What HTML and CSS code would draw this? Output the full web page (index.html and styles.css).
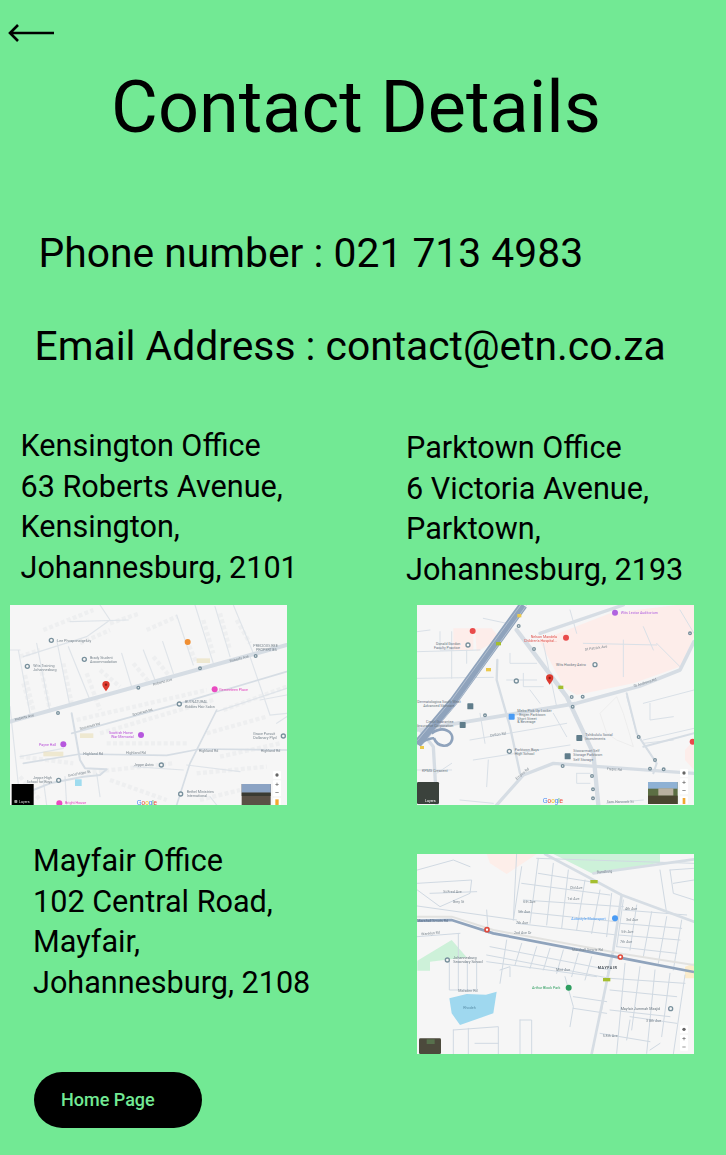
FILE: index.html
```html
<!DOCTYPE html>
<html lang="en">
<head>
<meta charset="utf-8">
<title>Contact Details</title>
<link rel="stylesheet" href="styles.css">
</head>
<body>
<main class="page">
  <a class="back" href="#" aria-label="Back">
    <svg width="48" height="20" viewBox="0 0 48 20"><path d="M47 9H3M11 1 3 9l8 8" fill="none" stroke="#000" stroke-width="2.600"/></svg>
  </a>
  <h1 class="title">Contact Details</h1>
  <p class="line phone">Phone number : 021 713 4983</p>
  <p class="line email">Email Address : contact@etn.co.za</p>

  <section class="offices">
    <div class="office-a">
      <p class="address">Kensington Office<br>63 Roberts Avenue,<br>Kensington,<br>Johannesburg, 2101</p>
      <svg class="map map-a" viewBox="30 15 831 600" role="img" aria-label="Map of Kensington">
        <rect x="30" y="15" width="831" height="600" fill="#f6f6f6"/>
        <g fill="none" stroke="#eeeff0" stroke-width="13" stroke-dasharray="12 7">
          <path d="M60 170 120 150M75 225 100 330M125 215 150 330M190 190 215 310M260 220 300 330M240 130 330 90M300 210 360 260M400 190 450 250M460 170 510 230M560 120 590 190M610 60 640 160M660 40 690 150M710 60 750 130M330 70 420 40M70 250 90 320M130 90 280 30M440 90 530 50"/>
          <path d="M230 360 620 270M300 400 640 300M670 330 860 260M60 470 220 490M320 430 560 430M620 400 800 350M660 470 840 430M240 520 520 490M590 520 800 500M330 540 500 600M600 600 720 570M60 530 120 600"/>
        </g>
        <g fill="none" stroke="#dfe4e9" stroke-width="3.500" stroke-linecap="round">
          <path d="M55 150 90 340M110 130 150 335M170 120 210 320M205 140 270 300M365 160 395 260M430 150 465 240M488 125 520 220M530 45 580 195M585 15 640 190M645 20 690 170M700 15 760 160M300 15 330 60 260 110 70 170M210 65 385 60M750 170 810 345 860 340M30 150 60 150M30 320 60 600M130 540 140 615M195 530 200 615M650 335 860 265M780 300 860 285M560 495 720 515M290 520 300 590M630 590 650 615M830 370 860 350M400 500 550 510M60 470 190 445"/>
        </g>
        <g fill="none" stroke="#d6dde4" stroke-linejoin="round" stroke-linecap="round">
          <path d="M30 365 860 135" stroke-width="12"/>
          <path d="M215 400 540 310 860 215" stroke-width="5"/>
          <path d="M240 462 500 466 600 447 860 450M70 490 240 462" stroke-width="5"/>
          <path d="M215 340 240 480 255 505 320 508 300 525 250 530 150 550 100 570" stroke-width="6"/>
          <path d="M650 330 570 490 530 615" stroke-width="5"/>
        </g>
        <rect x="225" y="538" width="20" height="20" fill="#9fdcef"/>
        <g fill="#eadfb8" opacity=".6"><rect x="130" y="455" width="60" height="14"/><rect x="590" y="175" width="40" height="14"/><rect x="240" y="400" width="40" height="14"/></g>
        <g class="lbl" fill="#7a868f">
          <text x="172" y="126">Lee Phosponatgeluiy</text>
          <text x="270" y="176">Brady Student</text><text x="270" y="189">Accommodation</text>
          <text x="100" y="200">Wits Training</text><text x="100" y="212">Johannesburg</text>
          <text x="760" y="140">PRECIOUS BEE</text><text x="768" y="152">PROPERTIES</text>
          <text x="555" y="308">BUI NATURAL</text><text x="555" y="323">Kiddies Hair Salon</text>
          <text x="402" y="499">Jeppe Astro</text>
          <text x="760" y="406">Grace Pursuit</text><text x="760" y="418">Dollanary Plyd</text>
          <text x="100" y="538">Jeppe High</text><text x="80" y="550">School for Boys</text>
          <text x="560" y="580">Bethel Ministries</text><text x="560" y="592">International</text>
        </g>
        <g class="lbl" fill="#7d8891">
          <text x="45" y="362" transform="rotate(-13 45 362)">Roberts Ave</text>
          <text x="460" y="257" transform="rotate(-15 460 257)">Roberts Ave</text>
          <text x="690" y="187" transform="rotate(-15 690 187)">Roberts Ave</text>
          <text x="398" y="348" transform="rotate(-15 398 348)">Somerset Rd</text>
          <text x="240" y="390" transform="rotate(-15 240 390)">Somerset Rd</text>
          <text x="250" y="465">Highland Rd</text><text x="378" y="462">Highland Rd</text><text x="596" y="455">Highland Rd</text><text x="782" y="457">Highland Rd</text>
          <text x="205" y="530" transform="rotate(-10 205 530)">Good Hope St</text>
        </g>
        <g class="lbl" fill="#b84fd8">
          <text x="327" y="402">Scottish Horse</text><text x="333" y="415">War Memorial</text>
          <text x="117" y="437">Payne Hall</text>
        </g>
        <g class="lbl" fill="#e23fbc"><text x="658" y="274">Gemeeteen Place</text><text x="195" y="613">Bright House</text></g>
        <g fill="#b657dd"><circle cx="423" cy="405" r="9"/><circle cx="190" cy="433" r="9"/></g>
        <g fill="#e94bc0"><circle cx="644" cy="268" r="9"/><circle cx="178" cy="610" r="9"/></g>
        <circle cx="563" cy="126" r="9" fill="#f08f33"/>
        <g fill="#f6f6f6" stroke="#78909c" stroke-width="4"><circle cx="154" cy="121" r="6"/><circle cx="253" cy="178" r="6"/><circle cx="82" cy="199" r="6"/><circle cx="538" cy="312" r="6"/><circle cx="484" cy="495" r="6"/><circle cx="850" cy="408" r="6"/><circle cx="176" cy="541" r="6"/><circle cx="542" cy="582" r="6"/><circle cx="174" cy="339" r="4"/><circle cx="415" cy="263" r="4"/><circle cx="600" cy="205" r="4"/><circle cx="767" cy="168" r="4"/></g>
        <path d="M318 274c-5-9-11-13-11-20a11 11 0 0 1 22 0c0 7-6 11-11 20z" fill="#dd3a2f"/><circle cx="318" cy="254" r="3.500" fill="#8a1c14"/>
        <rect x="35" y="552" width="66" height="63" fill="#000"/>
        <text class="lbl" x="57" y="609" fill="#ddd">Layers</text>
        <rect x="43" y="600" width="9" height="9" rx="2" fill="#999"/>
        <rect x="725" y="552" width="87" height="63" fill="#5a5046"/><rect x="725" y="552" width="87" height="26" fill="#8ba3c4"/><rect x="725" y="578" width="87" height="10" fill="#3a3a32"/>
        <text class="g" x="410" y="614"><tspan fill="#4285f4">G</tspan><tspan fill="#ea4335">o</tspan><tspan fill="#fbbc05">o</tspan><tspan fill="#4285f4">g</tspan><tspan fill="#34a853">l</tspan><tspan fill="#ea4335">e</tspan></text>
        <g fill="#fff"><rect x="819" y="513" width="24" height="24" rx="3"/><rect x="819" y="541" width="24" height="48" rx="3"/><rect x="819" y="593" width="24" height="22" rx="3"/></g>
        <g fill="#666"><circle cx="831" cy="525" r="5"/><rect x="826" y="552" width="10" height="2"/><rect x="830" y="548" width="2" height="10"/><rect x="826" y="577" width="10" height="2"/></g>
        <path d="M826 598h10v17h-10z" fill="#f0a830"/>
      </svg>
    </div>
    <div class="office-b">
      <p class="address">Parktown Office<br>6 Victoria Avenue,<br>Parktown,<br>Johannesburg, 2193</p>
      <svg class="map map-b" viewBox="21 15 831 600" role="img" aria-label="Map of Parktown">
        <rect x="21" y="15" width="831" height="600" fill="#f6f6f6"/>
        <path d="M130 85 190 85 190 150 130 150zM195 85 245 85 270 115 200 155z" fill="#fdedea"/>
        <path d="M388 122 600 40 800 15 852 15 852 110 810 200 670 250 500 285 462 262z" fill="#fdedea"/>
        <path d="M852 420 825 450 825 480 852 510z" fill="#fdedea"/>
        <g fill="none" stroke="#e9e9e9" stroke-width="2"><path d="M570 340 620 290 640 340 670 440 620 420 590 400z"/></g>
        <g fill="none" stroke="#d9e0e7" stroke-width="3" stroke-linecap="round">
          <path d="M22 155 210 150M22 235 250 232M125 95 125 235M90 95 90 150 130 150M170 150 170 190M300 160 300 190 380 190M290 240 380 240M340 220 340 260 400 260M360 270 390 310M400 130 440 320M430 340 470 410M210 340 225 430M180 420 470 370M190 480 480 435M235 480 230 560M125 490 80 520M500 520 540 520M500 520 500 550 540 550M22 510 125 510M700 310 852 270M720 310 720 360 790 350M650 290 680 400 740 490M700 420 852 385M700 430 790 420M520 130 740 135M640 120 640 230M700 80 730 150M740 130 810 200M810 30 852 100M480 30 500 100M220 55 290 70M22 95 60 90M150 600 250 610M590 610 700 600"/>
        </g>
        <g fill="none" stroke="#d6dde4" stroke-linejoin="round" stroke-linecap="round">
          <path d="M320 90 470 290 550 460 565 615" stroke-width="13"/>
          <path d="M22 390 140 370 500 310 690 258 810 210 852 125" stroke-width="11"/>
          <path d="M390 100 640 15" stroke-width="10"/>
          <path d="M260 615 340 525 430 490 852 520" stroke-width="10"/>
          <path d="M22 380 70 440 80 615" stroke-width="10"/>
          <path d="M262 180 260 240 300 380 330 520" stroke-width="7"/>
          <path d="M650 280 680 400 740 490 730 520" stroke-width="6"/>
          <path d="M700 440 852 400" stroke-width="6"/>
        </g>
        <path d="M22 432 130 305 340 15" fill="none" stroke="#8fa3bc" stroke-width="26"/>
        <path d="M22 422 125 300 332 15M34 438 138 312 350 15" fill="none" stroke="#c4cfdb" stroke-width="2"/>
        <path d="M65 400C100 375 132 395 126 420 118 445 82 442 72 415M22 432C50 420 60 412 72 415" fill="none" stroke="#8fa3bc" stroke-width="8"/>
        <g fill="#a4be2e"><rect x="258" y="126" width="15" height="10"/><rect x="445" y="257" width="15" height="10"/></g>
        <g fill="#ecc94b"><rect x="228" y="204" width="15" height="10"/><rect x="322" y="42" width="12" height="10"/><rect x="30" y="438" width="12" height="9"/></g>
        <g class="lbl" fill="#68757f">
          <text x="78" y="136">Donald Gordon</text><text x="72" y="148">Faculty Practice</text>
          <text x="438" y="199">Wits Hockey Astro</text>
          <text x="22" y="310">Dermatologica South West</text><text x="40" y="322">Advanced Skincare</text>
          <text x="48" y="368">Credit Guarantee</text><text x="22" y="380">Insurance Corporation</text>
          <text x="322" y="336">Melro Pick Up Locker</text><text x="322" y="348">- Engen Parktown</text><text x="322" y="360">Short Street</text><text x="322" y="370">&amp; Beverage</text>
          <text x="526" y="408">Tshikululu Social</text><text x="526" y="420">Investments</text>
          <text x="490" y="456">Stowarmart Self</text><text x="490" y="468">Storage Parktown</text><text x="490" y="482">Self Storage</text>
          <text x="314" y="453">Parktown Boys</text><text x="314" y="465">High School</text>
          <text x="36" y="517">KPMG Crescent</text>
        </g>
        <g class="lbl" fill="#7d8891">
          <text x="525" y="152" transform="rotate(-8 525 152)">St Patrick Ave</text>
          <text x="672" y="262" transform="rotate(-17 672 262)">St Andrews Rd</text>
          <text x="240" y="410" transform="rotate(-8 240 410)">Cotton Rd</text>
          <text x="590" y="510" transform="rotate(4 590 510)">Frepic Rd</text>
          <text x="320" y="540" transform="rotate(-40 320 540)">Empire Rd</text>
          <text x="590" y="608">Sam Hancock St</text>
        </g>
        <g class="lbl" fill="#e0524d"><text x="362" y="113">Nelson Mandela</text><text x="342" y="125">Children's Hospital...</text></g>
        <text class="lbl" x="632" y="43" fill="#b063e0">Wits Lector Auditorium</text>
        <g fill="#e94b4b"><circle cx="188" cy="93" r="9"/><circle cx="468" cy="113" r="9"/><circle cx="848" cy="425" r="9"/></g>
        <circle cx="615" cy="38" r="9" fill="#b063e0"/>
        <rect x="296" y="341" width="18" height="18" rx="3" fill="#4a9bf4"/>
        <g fill="#607d8b"><rect x="172" y="310" width="18" height="18" rx="2"/><rect x="149" y="366" width="18" height="18" rx="2"/><rect x="499" y="405" width="18" height="18" rx="2"/><rect x="464" y="460" width="18" height="18" rx="2"/></g>
        <g fill="#f6f6f6" stroke="#78909c" stroke-width="4"><circle cx="174" cy="135" r="6"/><circle cx="555" cy="194" r="6"/><circle cx="319" cy="243" r="6"/><circle cx="298" cy="454" r="6"/><circle cx="326" cy="78" r="4"/><circle cx="372" cy="147" r="4"/><circle cx="485" cy="291" r="4"/><circle cx="518" cy="290" r="4"/><circle cx="488" cy="320" r="4"/><circle cx="225" cy="346" r="4"/><circle cx="686" cy="411" r="4"/><circle cx="735" cy="480" r="4"/><circle cx="720" cy="506" r="4"/><circle cx="761" cy="508" r="4"/><circle cx="458" cy="498" r="4"/><circle cx="546" cy="528" r="4"/><circle cx="549" cy="568" r="4"/><circle cx="549" cy="595" r="4"/><circle cx="840" cy="100" r="4"/></g>
        <path d="M419 254c-5-9-11-13-11-20a11 11 0 0 1 22 0c0 7-6 11-11 20z" fill="#dd3a2f"/><circle cx="419" cy="234" r="3.500" fill="#8a1c14"/>
        <rect x="21" y="546" width="66" height="66" rx="4" fill="#3b423c"/><text class="lbl" x="45" y="605" fill="#fff">Layers</text>
        <rect x="714" y="546" width="89" height="66" fill="#5c6e43"/><rect x="714" y="546" width="89" height="20" fill="#8eb1d4"/><rect x="745" y="565" width="45" height="22" fill="#b9b0a0"/><rect x="714" y="587" width="89" height="25" fill="#4a4530"/>
        <text class="g" x="398" y="608"><tspan fill="#4285f4">G</tspan><tspan fill="#ea4335">o</tspan><tspan fill="#fbbc05">o</tspan><tspan fill="#4285f4">g</tspan><tspan fill="#34a853">l</tspan><tspan fill="#ea4335">e</tspan></text>
        <g fill="#fff"><rect x="810" y="507" width="24" height="24" rx="3"/><rect x="810" y="535" width="24" height="48" rx="3"/><rect x="810" y="589" width="24" height="24" rx="3"/></g>
        <g fill="#666"><circle cx="822" cy="519" r="5"/><rect x="817" y="546" width="10" height="2"/><rect x="821" y="542" width="2" height="10"/><rect x="817" y="571" width="10" height="2"/></g>
        <path d="M818 594h8v18h-8z" fill="#f0a830"/>
      </svg>
    </div>
    <div class="office-c">
      <p class="address">Mayfair Office<br>102 Central Road,<br>Mayfair,<br>Johannesburg, 2108</p>
      <a class="home" href="#">Home Page</a>
    </div>
    <div class="office-d">
      <svg class="map map-c" viewBox="21 12 831 600" role="img" aria-label="Map of Mayfair">
        <rect x="21" y="12" width="831" height="600" fill="#f6f6f6"/>
        <path d="M430 12 550 72 750 38 750 12z" fill="#cdf1d9"/>
        <path d="M230 12 240 40 290 72 380 12z" fill="#fdeee9"/>
        <path d="M22 332 125 270 170 322 60 335 60 362 22 362z" fill="#cdf1d9"/>
        <path d="M825 350 852 340 852 385 825 385z" fill="#fbeccb"/>
        <path d="M118 445 170 432 228 434 260 425 250 490 150 525 125 490z" fill="#9fd8ef"/>
        <g fill="none" stroke="#d0d9e2" stroke-width="3" stroke-linecap="round">
          <path d="M310 210 335 50 M360 220 385 25M410 225 430 40M455 235 475 60M500 240 525 90M545 250 570 120M590 260 605 130M640 150 620 290M680 165 660 300M725 185 700 320M770 200 745 340M815 210 790 360"/>
          <path d="M340 150 640 170M330 185 620 215M320 220 620 255M335 100 600 135M385 70 540 95M640 180 830 195M630 220 815 235M625 255 810 270M620 290 800 310"/>
          <path d="M290 270 270 400M335 280 315 345M380 290 360 355M420 295 400 360M460 300 440 370M505 310 485 380M545 320 525 390M600 330 575 480M645 340 620 610M690 350 665 540M735 360 710 610M780 370 755 560M825 375 790 612"/>
          <path d="M240 290 600 360M230 315 600 385M230 335 560 380M600 385 825 400M490 440 590 455M490 475 590 490M600 420 800 440M600 480 780 500M660 500 800 520M570 550 720 575M660 510 650 570"/>
          <path d="M22 60 130 30 180 50M22 100 185 90 180 130 90 170 22 120M60 130 200 125M22 260 150 250M145 250 145 420 M118 335 118 420 200 420 200 335M172 335 172 420M230 180 235 250M22 168 320 210M380 25 852 40M780 60 852 55M780 60 790 130 852 150M790 100 852 90M750 60 770 190M130 540 130 612M130 540 265 530 265 612M175 535 175 612M195 580 265 580M330 510 365 510 365 612M330 510 330 612M465 380 490 470 480 530M270 360 300 350 300 380M320 10 310 210M720 600 750 580"/>
        </g>
        <g fill="none" stroke="#d6dde4" stroke-linecap="round" stroke-linejoin="round">
          <path d="M405 12 635 135 852 215" stroke-width="8"/>
          <path d="M635 135 610 300 545 612" stroke-width="8"/>
          <path d="M550 70 852 28" stroke-width="8"/>
          <path d="M22 200 125 200 250 240 640 312 852 345" stroke="#e2e2e0" stroke-width="6"/>
        </g>
        <path d="M22 212 125 210 250 250 640 325 852 366" fill="none" stroke="#8fa3bc" stroke-width="8"/>
        <g fill="#a4be2e"><rect x="541" y="90" width="22" height="10"/><rect x="579" y="384" width="22" height="10"/></g>
        <g class="lbl" fill="#7d8891">
          <text x="560" y="70" transform="rotate(-4 560 70)">Bandburg</text>
          <text x="22" y="216" fill="#5a6f87">Marshall Smuts Rd</text>
          <text x="34" y="256" transform="rotate(-5 34 256)">Wanklyn Rd</text>
          <text x="100" y="128">St Fred Ave</text><text x="128" y="160">Grey St</text>
          <text x="340" y="158">6th Ave</text><text x="324" y="190">5th Ave</text><text x="318" y="222">7th Ave</text><text x="312" y="252">2nd Ave Dr</text>
          <text x="480" y="116">Old Ave</text><text x="472" y="149">1st Ave</text>
          <text x="645" y="180">4th Ave</text><text x="648" y="214">3rd Ave</text><text x="634" y="248">5th Ave</text><text x="630" y="280">7th Ave</text>
          <text x="486" y="303">Marshall Smuts Rd</text><text x="438" y="362">Mint Ave</text>
          <text x="145" y="425">Malsden Rd</text><text x="708" y="515">3 8th Ave</text><text x="578" y="560">5 8th Ave</text>
          <text x="160" y="476" fill="#5a8fa8">Rhodeh</text>
        </g>
        <text class="lbl" x="563" y="357" font-weight="700" fill="#444d55" letter-spacing="2">MAYFAIR</text>
        <g class="lbl" fill="#68757f"><text x="130" y="328">Johannesburg</text><text x="130" y="340">Secondary School</text><text x="632" y="480">Mayfair Jummah Masjid</text></g>
        <text class="lbl" x="366" y="418" fill="#2f9e60">Arthur Block Park</text>
        <text class="lbl" x="484" y="209" fill="#4a9bf4">Autostyle Motorsport</text>
        <circle cx="615" cy="205" r="9" fill="#4a9bf4"/>
        <circle cx="476" cy="413" r="9" fill="#2f9e60"/>
        <g fill="#f6f6f6" stroke="#78909c" stroke-width="4"><circle cx="112" cy="330" r="6"/><circle cx="782" cy="476" r="6"/></g>
        <g fill="#fff" stroke="#e04b3d" stroke-width="5"><circle cx="231" cy="239" r="6"/><circle cx="631" cy="321" r="6"/></g>
        <rect x="27" y="565" width="66" height="47" rx="4" fill="#4c4a3c"/><rect x="50" y="568" width="24" height="14" fill="#57704c"/>
        <g fill="#fff"><rect x="810" y="526" width="24" height="24" rx="3"/><rect x="810" y="554" width="24" height="48" rx="3"/></g>
        <g fill="#666"><circle cx="822" cy="538" r="5"/><rect x="817" y="565" width="10" height="2"/><rect x="821" y="561" width="2" height="10"/><rect x="817" y="590" width="10" height="2"/></g>
      </svg>
    </div>
  </section>
</main>
</body>
</html>
```

FILE: styles.css
```css
* { box-sizing: border-box; }

html, body {
  margin: 0;
  background: #72e994;
}

.page {
  width: 726px;
  height: 1155px;
  overflow: hidden;
  padding-top: 24px;
  font-family: Roboto, "Noto Sans", sans-serif;
  color: #000;
}

.back {
  display: block;
  width: 48px;
  height: 20px;
  margin-left: 7px;
}

.back svg { display: block; }

.title {
  margin: 22px 0 0;
  padding-right: 14px;
  font-size: 72px;
  font-weight: 400;
  line-height: 84px;
  text-align: center;
}

.line {
  margin: 0;
  font-size: 40.800px;
  line-height: 47px;
}

.phone { margin-top: 80px; padding-left: 38.500px; }
.email { margin-top: 46px; padding-left: 34.500px; }

.offices {
  display: grid;
  grid-template-columns: 406px 320px;
  grid-template-rows: 417px auto;
  margin-top: 54px;
}

.address {
  margin: 0;
  font-size: 30.600px;
  line-height: 40.500px;
  white-space: nowrap;
}

.map {
  display: block;
  width: 277px;
  height: 200px;
  filter: blur(.5px);
}

.lbl, .map text { font-family: Roboto, sans-serif; font-size: 11px; }
.map .g { font-family: "Liberation Sans", sans-serif; font-size: 19px; }

.office-a { padding: 2px 0 0 20.500px; }
.map-a { margin: 17px 0 0 -10.500px; }

.office-b { padding-top: 4px; }
.map-b { margin: 15px 0 0 11px; }

.office-c { padding: 0 0 0 33px; }
.office-d { padding: 13px 0 0 11px; }

.home {
  display: block;
  width: 168px;
  height: 56px;
  margin: 69px 0 0 1px;
  padding-left: 27px;
  border-radius: 28px;
  background: #000;
  color: #72e994;
  font-size: 18px;
  font-weight: 500;
  line-height: 56px;
  text-decoration: none;
}
```
